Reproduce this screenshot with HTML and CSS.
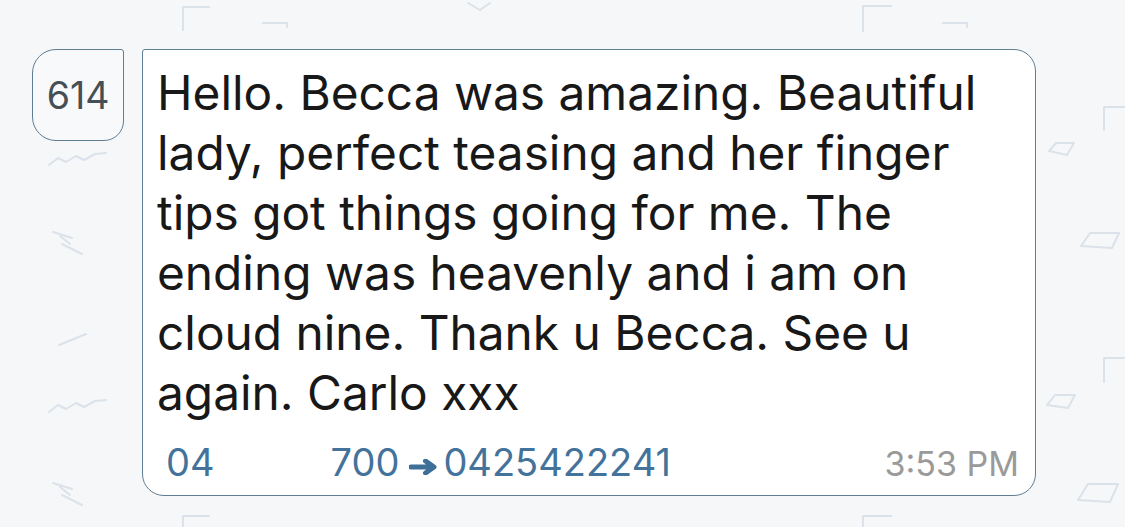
FILE: index.html
```html
<!DOCTYPE html>
<html lang="en">
<head>
<meta charset="utf-8">
<title>Message</title>
<link rel="stylesheet" href="styles.css">
</head>
<body>
<svg class="doodles" width="1125" height="527" viewBox="0 0 1125 527" aria-hidden="true">
  <g fill="none" stroke="#dbe2ea" stroke-width="2" stroke-linecap="round" stroke-linejoin="round">
    <path d="M183 30V7H209"/>
    <path d="M263 23H287V27"/>
    <path d="M863 31V6H891"/>
    <path d="M943 23H967V27"/>
    <path d="M1104 130V107H1125"/>
    <path d="M1104 382V358H1125"/>
    <path d="M1049 151L1056 143H1074L1067 155Z"/>
    <path d="M1081 246L1090 233H1119L1112 248Z"/>
    <path d="M1047 405L1055 395H1075L1068 408Z"/>
    <path d="M1078 500L1088 484H1118L1110 502Z"/>
    <path d="M49 165L58 158L66 162L76 156L84 160L95 154L106 153"/>
    <path d="M49 412L58 405L66 409L76 403L84 407L95 401L106 400"/>
    <path d="M53 232L72 238M60 236L70 244M62 244L82 254"/>
    <path d="M53 483L72 489M60 487L70 495M62 495L82 505"/>
    <path d="M59 345L86 334"/>
    <path d="M183 527V516H209"/>
    <path d="M863 527V516H891"/>
    <path d="M468 3L480 10L490 3"/>
  </g>
</svg>
<main class="thread">
  <div class="row">
    <div class="badge">614</div>
    <div class="bubble">
      <p class="msg">Hello. Becca was amazing. Beautiful<br>lady, perfect teasing and her finger<br>tips got things going for me. The<br>ending was heavenly and i am on<br>cloud nine. Thank u Becca. See u<br>again. Carlo xxx</p>
      <div class="meta">
        <span class="route">04<span class="redact"></span>700<svg class="arrow" width="29" height="16" viewBox="0 0 29 16" aria-hidden="true"><path d="M2 8H23M16.5 2L25 8L16.5 14" fill="none" stroke="currentColor" stroke-width="5" stroke-linecap="round" stroke-linejoin="round"/></svg>0425422241</span>
        <span class="time">3:53 PM</span>
      </div>
    </div>
  </div>
</main>
</body>
</html>
```
FILE: styles.css
```css
html, body {
  margin: 0;
  padding: 0;
}

body {
  width: 1125px;
  height: 527px;
  overflow: hidden;
  background: #f6f7f9;
  font-family: Inter, "Liberation Sans", Arial, sans-serif;
  position: relative;
}

.doodles {
  position: absolute;
  left: 0;
  top: 0;
  z-index: 0;
}

.thread {
  position: relative;
  z-index: 1;
  padding: 49px 0 0 32px;
}

.row {
  display: flex;
  align-items: flex-start;
  gap: 18px;
}

.badge {
  box-sizing: border-box;
  width: 92px;
  height: 92px;
  border: 1.5px solid #5f7d93;
  border-radius: 24px 3px 20px 24px;
  display: flex;
  align-items: center;
  justify-content: center;
  font-size: 37.5px;
  color: #454f54;
  background: #f8f9fb;
}

.bubble {
  box-sizing: border-box;
  width: 894px;
  height: 447px;
  border: 1.5px solid #5f7d93;
  border-radius: 3px 22px 22px 22px;
  background: #ffffff;
  padding: 13px 16px 0 14px;
  display: flex;
  flex-direction: column;
}

.msg {
  margin: 0;
  font-size: 47.8px;
  line-height: 60px;
  color: #181818;
  white-space: nowrap;
}

.meta {
  margin-top: 17px;
  padding-left: 9px;
  display: flex;
  justify-content: space-between;
  align-items: baseline;
  line-height: 44px;
}

.route {
  font-size: 38px;
  color: #43739a;
  white-space: nowrap;
}

.redact {
  display: inline-block;
  width: 116px;
}

.arrow {
  display: inline-block;
  margin: 0 5px 0 10px;
  vertical-align: 1px;
  color: #3e6f98;
}

.time {
  font-size: 34px;
  color: #9a9a9a;
  white-space: nowrap;
}
```
